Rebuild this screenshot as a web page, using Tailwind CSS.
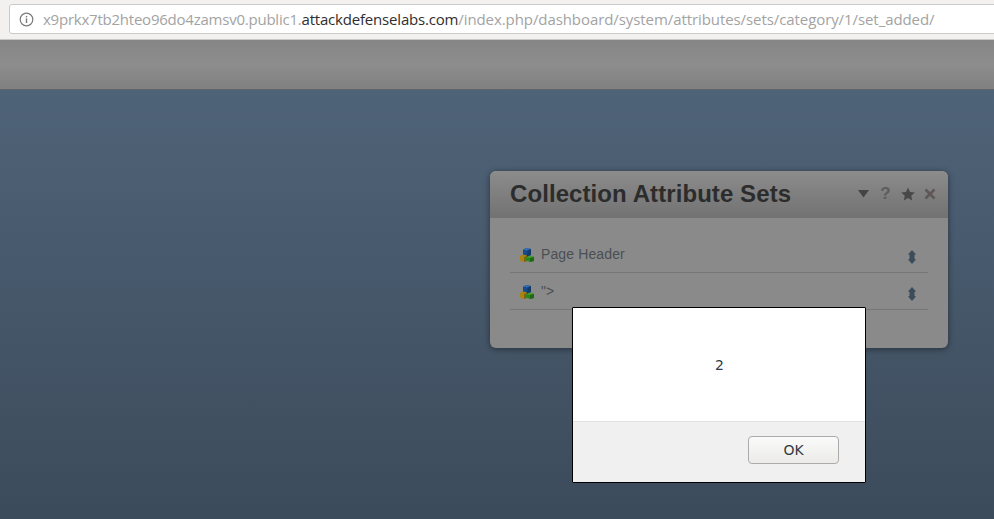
<!DOCTYPE html>
<html lang="en">
<head>
  <meta charset="UTF-8" />
  <meta name="viewport" content="width=device-width, initial-scale=1.0" />
  <title>Collection Attribute Sets</title>
  <script src="https://cdn.jsdelivr.net/npm/@tailwindcss/browser@4"></script>
</head>
<body class="relative w-[994px] h-[519px] overflow-hidden flex flex-col bg-[#3c4b5b]">
  <!-- Browser address bar -->
  <div class="h-[40px] shrink-0 bg-[#f2f1f0] pt-[4px] pl-[9px] border-b border-[#c9c7c4] overflow-hidden">
    <div class="w-[1000px] h-[30px] bg-white border border-[#cdcbc8] rounded-[3px] flex items-center pl-[9px] font-['Open_Sans','Noto_Sans',sans-serif] text-[15px] text-[#a3a3a3] whitespace-nowrap">
      <svg class="w-[15px] h-[15px] mr-[9px] shrink-0" viewBox="0 0 15 15" fill="none">
        <circle cx="7.5" cy="7.5" r="6.3" stroke="#7a7a7a" stroke-width="1.2" />
        <rect x="6.8" y="6.4" width="1.4" height="4.6" fill="#7a7a7a" />
        <rect x="6.8" y="3.9" width="1.4" height="1.5" fill="#7a7a7a" />
      </svg>
      <span class="tracking-[-0.23px]">x9prkx7tb2hteo96do4zamsv0.public1.</span><span class="tracking-[-0.19px] text-[#2e2e2e]">attackdefenselabs.com</span><span class="tracking-[-0.08px]">/index.php/dashboard/system/attributes/sets/category/1/set_added/</span>
    </div>
  </div>

  <!-- Dimmed page header -->
  <div class="h-[50px] shrink-0 bg-gradient-to-b from-[#868686] via-[#8d8d8d] to-[#808080] border-b border-[#5f6468]"></div>

  <!-- Dimmed page body -->
  <main class="flex-1 bg-gradient-to-b from-[#4f6378] to-[#3c4b5b] pt-[81px] pl-[490px] font-['Liberation_Sans',sans-serif]">
    <div class="w-[458px] h-[177px] rounded-[6px] bg-[#8a8a8a] shadow-[0_1px_6px_rgba(0,0,0,0.45)] overflow-hidden">
      <div class="h-[47px] px-[20px] pb-[2px] flex items-center justify-between bg-gradient-to-b from-[#8c8c8c] to-[#727272]">
        <h1 class="text-[24px] tracking-[0.08px] font-bold text-[#2c2c2c] leading-none">Collection Attribute Sets</h1>
        <div class="flex items-center gap-[9px] mr-[-8px]">
          <svg class="w-[13px] h-[9px]" viewBox="0 0 13 9"><path d="M1 1h11L6.500 8.500z" fill="#444" /></svg>
          <span class="w-[13px] text-center text-[17px] leading-none font-bold text-[#5c5c5c]">?</span>
          <svg class="w-[14px] h-[14px]" viewBox="0 0 14 14"><path d="M7 .5l2 4.500 4.800.5-3.600 3.200 1 4.800L7 11l-4.200 2.500 1-4.800L.2 5.500 5 5z" fill="#484848" /></svg>
          <svg class="w-[12px] h-[12px]" viewBox="0 0 12 12"><path d="M1.500 1.500l9 9M10.500 1.500l-9 9" stroke="#5f5757" stroke-width="2.600" /></svg>
        </div>
      </div>
      <ul class="px-[20px] pt-[18px] text-[14px] tracking-[0.12px] text-[#4a4f55]">
        <li class="h-[37px] border-b border-[#767676] flex items-center justify-between pl-[10px] pr-[11px]">
          <span class="flex items-center gap-[7px]">
            <svg class="w-[14px] h-[14px] mt-[2px]" viewBox="0 0 14 14">
              <path d="M3 1.500L6.500 0 11 1v6L7 9 3 7.500z" fill="#1a4a88" />
              <path d="M3 1.500L6.500 0 11 1 7.500 2.500z" fill="#3570b4" />
              <path d="M7.500 2.500L11 1v6L7 9z" fill="#143a6c" />
              <path d="M0 8l3-1.500 4 1V13l-3 1-4-1.500z" fill="#a88412" />
              <path d="M4 9l3-1.500V13l-3 1z" fill="#7f6410" />
              <path d="M6 9.500L10 7.500l4 1.500v4l-4 1-4-1.500z" fill="#2a851c" />
              <path d="M10 9.500l4-.5v4l-4 1z" fill="#1e6a14" />
              <path d="M6 9.500l4-2 4 1.500-4 .8z" fill="#4d9c34" />
            </svg>
            Page Header
          </span>
          <svg class="w-[10px] h-[14px] mt-[5px]" viewBox="0 0 10 14"><path d="M5 0l4 4.500-1.500.5v4l1.500.5L5 14 1 9.500 2.500 9V5L1 4.500z" fill="#3d4c5a" /></svg>
        </li>
        <li class="h-[37px] border-b border-[#767676] flex items-center justify-between pl-[10px] pr-[11px]">
          <span class="flex items-center gap-[7px]">
            <svg class="w-[14px] h-[14px] mt-[2px]" viewBox="0 0 14 14">
              <path d="M3 1.500L6.500 0 11 1v6L7 9 3 7.500z" fill="#1a4a88" />
              <path d="M3 1.500L6.500 0 11 1 7.500 2.500z" fill="#3570b4" />
              <path d="M7.500 2.500L11 1v6L7 9z" fill="#143a6c" />
              <path d="M0 8l3-1.500 4 1V13l-3 1-4-1.500z" fill="#a88412" />
              <path d="M4 9l3-1.500V13l-3 1z" fill="#7f6410" />
              <path d="M6 9.500L10 7.500l4 1.500v4l-4 1-4-1.500z" fill="#2a851c" />
              <path d="M10 9.500l4-.5v4l-4 1z" fill="#1e6a14" />
              <path d="M6 9.500l4-2 4 1.500-4 .8z" fill="#4d9c34" />
            </svg>
            "&gt;
          </span>
          <svg class="w-[10px] h-[14px] mt-[5px]" viewBox="0 0 10 14"><path d="M5 0l4 4.500-1.500.5v4l1.500.5L5 14 1 9.500 2.500 9V5L1 4.500z" fill="#3d4c5a" /></svg>
        </li>
      </ul>
    </div>
  </main>

  <!-- Alert dialog -->
  <div class="absolute left-[572px] top-[307px] w-[294px] h-[176px] border border-black rounded-[1px] flex flex-col bg-white font-['DejaVu_Sans',sans-serif] text-[#333b45]">
    <div class="flex-1 flex items-center justify-center text-[14px] pt-[2px] pl-[1px]">2</div>
    <div class="h-[61px] shrink-0 bg-[#f0f0f0] border-t border-[#e2e2e2] flex justify-end pt-[14px] pr-[26px]">
      <button class="w-[91px] h-[28px] rounded-[4px] border border-[#ababab] bg-gradient-to-b from-[#fafafa] to-[#ecebe9] text-[14px]">OK</button>
    </div>
  </div>
</body>
</html>
